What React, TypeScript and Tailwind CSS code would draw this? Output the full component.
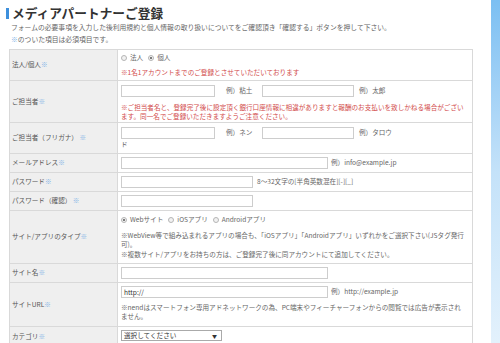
import type { ReactNode } from "react"

const Req = () => <span className="text-[#7db2e6]">※</span>

function Radio({ label, checked }: { label: string; checked?: boolean }) {
  return (
    <span className="inline-flex items-center gap-[3px] mr-[5px]">
      <span className="flex items-center justify-center w-[6px] h-[6px] rounded-full border border-[#b5b5b5] bg-[#f2f2f2]">
        {checked && <span className="w-[2px] h-[2px] rounded-full bg-[#555]" />}
      </span>
      {label}
    </span>
  )
}

function Field({ w, value }: { w: string; value?: string }) {
  return (
    <span
      className={`inline-block align-middle h-[12px] border border-[#cdcdcd] bg-white px-[2px] leading-[10px] text-[#333] ${w}`}
    >
      {value}
    </span>
  )
}

function Row({
  label,
  h,
  children,
  className = "",
}: {
  label: ReactNode
  h: string
  children: ReactNode
  className?: string
}) {
  return (
    <div className={`flex border-b border-[#d9d9d9] ${h}`}>
      <div className="w-[108px] shrink-0 flex items-center pl-[2px] bg-[#efefef] border-r border-[#d9d9d9] text-[#555]">
        {label}
      </div>
      <div className={`flex-1 pl-[3px] pr-[2px] text-[#666] ${className}`}>{children}</div>
    </div>
  )
}

export default function App() {
  return (
    <div className="flex w-[500px] h-[343px] overflow-hidden bg-white font-['Noto_Sans_CJK_JP','Liberation_Sans',sans-serif]">
      <div className="w-[491px] shrink-0">
        <div className="flex items-center gap-[3px] h-[16px] mt-[5px] pl-[6px]">
          <span className="w-[3px] h-[11px] bg-[#3d8fdc]" />
          <h1 className="text-[12.7px] font-bold text-[#333] leading-none">メディアパートナーご登録</h1>
        </div>
        <div className="pl-[11px] text-[6.8px] leading-[12px] text-[#666]">
          <p>フォームの必要事項を入力した後利用規約と個人情報の取り扱いについてをご確認頂き「確認する」ボタンを押して下さい。</p>
          <p>
            <Req />
            のついた項目は必須項目です。
          </p>
        </div>

        <div className="ml-[9px] mt-[4px] w-[464px] border border-[#d9d9d9] border-b-0 text-[6.6px]">
          <Row
            h="h-[31px]"
            className="pt-[3px]"
            label={
              <span>
                法人/個人<Req />
              </span>
            }
          >
            <div className="h-[10px] flex items-center">
              <Radio label="法人" />
              <Radio label="個人" checked />
            </div>
            <p className="mt-[4.5px] leading-[9px] text-[#d24b4b]">※1名1アカウントまでのご登録とさせていただいております</p>
          </Row>

          <Row
            h="h-[42px]"
            className="pt-[4px]"
            label={
              <span>
                ご担当者<Req />
              </span>
            }
          >
            <div className="flex h-[12px] items-center">
              <div className="w-[141px] shrink-0 flex items-center">
                <Field w="w-[94px]" />
                <span className="ml-[11px]">例）粘土</span>
              </div>
              <Field w="w-[92px]" />
              <span className="ml-[5px]">例）太郎</span>
            </div>
            <p className="mt-[6px] leading-[9px] text-[#d24b4b]">
              ※ご担当者名と、登録完了後に設定頂く銀行口座情報に相違がありますと報酬のお支払いを致しかねる場合がございます。同一名でご登録いただきますようご注意ください。
            </p>
          </Row>

          <Row
            h="h-[31px]"
            className="pt-[4px]"
            label={
              <span>
                ご担当者（フリガナ） <Req />
              </span>
            }
          >
            <div className="flex items-start">
              <div className="w-[134px] shrink-0 leading-[11px]">
                <Field w="w-[94px]" />
                <span className="ml-[11px]">例）ネンド</span>
              </div>
              <div className="ml-[7px] leading-[11px]">
                <Field w="w-[92px]" />
                <span className="ml-[5px]">例）タロウ</span>
              </div>
            </div>
          </Row>

          <Row
            h="h-[19px]"
            className="flex items-center"
            label={
              <span>
                メールアドレス<Req />
              </span>
            }
          >
            <Field w="w-[207px]" />
            <span className="ml-[3px]">例）info@example.jp</span>
          </Row>

          <Row
            h="h-[19px]"
            className="flex items-center"
            label={
              <span>
                パスワード<Req />
              </span>
            }
          >
            <Field w="w-[132px]" />
            <span className="ml-[4px]">8～32文字の[半角英数混在][-][_]</span>
          </Row>

          <Row
            h="h-[19px]"
            className="flex items-center"
            label={
              <span>
                パスワード（確認） <Req />
              </span>
            }
          >
            <Field w="w-[132px]" />
          </Row>

          <Row
            h="h-[53px]"
            className="pt-[4px]"
            label={
              <span>
                サイト/アプリのタイプ<Req />
              </span>
            }
          >
            <div className="h-[10px] flex items-center">
              <Radio label="Webサイト" checked />
              <Radio label="iOSアプリ" />
              <Radio label="Androidアプリ" />
            </div>
            <div className="mt-[5.5px] leading-[9.5px]">
              <p>※WebView等で組み込まれるアプリの場合も、「iOSアプリ」「Androidアプリ」いずれかをご選択下さい(JSタグ発行可)。</p>
              <p>※複数サイト/アプリをお持ちの方は、ご登録完了後に同アカウントにて追加してください。</p>
            </div>
          </Row>

          <Row
            h="h-[19px]"
            className="flex items-center"
            label={
              <span>
                サイト名<Req />
              </span>
            }
          >
            <Field w="w-[207px]" />
          </Row>

          <Row
            h="h-[44px]"
            className="pt-[3px]"
            label={
              <span>
                サイトURL<Req />
              </span>
            }
          >
            <div className="flex items-center h-[12px]">
              <Field w="w-[207px]" value="http://" />
              <span className="ml-[3px]">例）http://example.jp</span>
            </div>
            <p className="mt-[5px] pr-[5px] leading-[9px]">
              ※nendはスマートフォン専用アドネットワークの為、PC端末やフィーチャーフォンからの閲覧では広告が表示されません。
            </p>
          </Row>

          <Row
            h="h-[20px]"
            className="pt-[3px]"
            label={
              <span>
                カテゴリ<Req />
              </span>
            }
          >
            <div className="flex items-center justify-between w-[101px] h-[11px] border border-[#aaa] bg-white pl-[2px] pr-[4px] text-[#333]">
              <span>選択してください</span>
              <span className="text-[5px]">▼</span>
            </div>
          </Row>
        </div>
      </div>
      <div className="w-[9px] shrink-0 bg-linear-to-b from-[#7bbff2] via-[#c4e2f9] to-[#e3f1fc]" />
    </div>
  )
}
